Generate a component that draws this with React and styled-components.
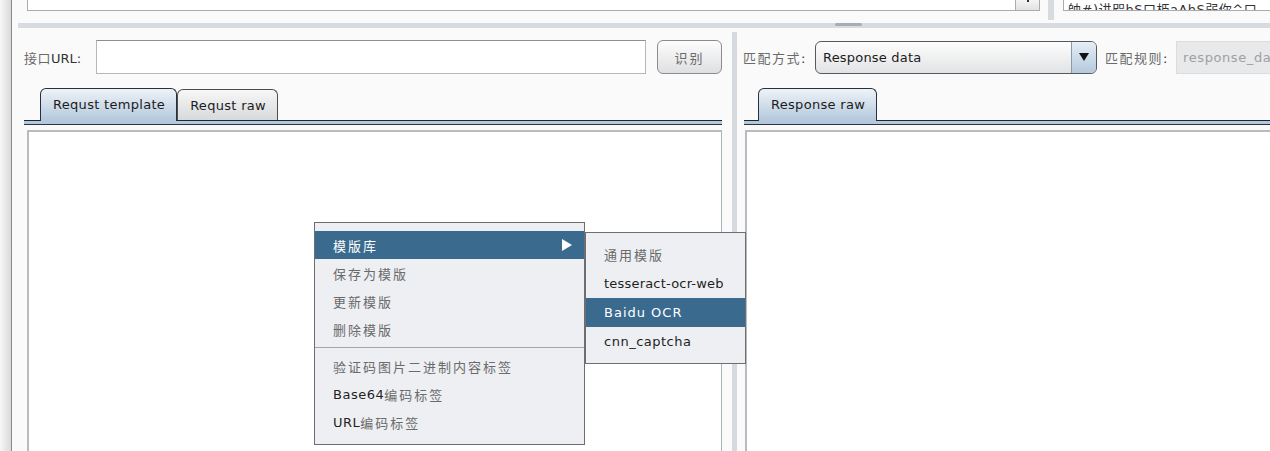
import React from "react";
import styled, { createGlobalStyle } from "styled-components";

const GlobalStyle = createGlobalStyle`
  html, body {
    margin: 0;
    padding: 0;
    background: #fafafa;
    overflow: hidden;
  }
  body {
    font-family: "DejaVu Sans", "Noto Sans CJK SC", sans-serif;
    font-size: 13px;
    color: #222;
  }
  * { box-sizing: border-box; }
`;

const Window = styled.div`
  position: relative;
  width: 1270px;
  height: 451px;
  display: flex;
  overflow: hidden;
  background: #fafafa;
`;

const EdgeStrip = styled.div`
  width: 12px;
  flex-shrink: 0;
  background: linear-gradient(to right, #f7f7f7, #dadada);
  border-right: 1px solid #8a8a8a;
`;

const Main = styled.div`
  flex: 1;
  min-width: 0;
  display: flex;
  flex-direction: column;
`;

/* ---- top split (clipped panes) ---- */
const TopRow = styled.div`
  height: 23px;
  flex-shrink: 0;
  display: flex;
  padding-left: 15px;
`;

const TopBox = styled.div`
  height: 11px;
  width: ${(p) => p.$w || "auto"};
  flex: ${(p) => (p.$w ? "none" : "1")};
  background: #fff;
  border: 1px solid #a9abb0;
  border-top: none;
  border-right: ${(p) => (p.$open ? "none" : "1px solid #a9abb0")};
  display: flex;
  align-items: flex-end;
  justify-content: flex-end;
  overflow: hidden;
`;

const ScrollBtn = styled.div`
  width: 24px;
  height: 10px;
  border-left: 1px solid #a9abb0;
  background: linear-gradient(#f4f4f4, #e2e2e2);
  display: flex;
  justify-content: center;
  &::after {
    content: "";
    width: 2px;
    height: 2px;
    background: #333;
  }
`;

const GarbledText = styled.div`
  line-height: 15px;
  padding-left: 4px;
  margin-bottom: -7px;
  white-space: nowrap;
  color: #333;
  font-size: 13px;
  letter-spacing: 0.5px;
  align-self: flex-end;
  margin-right: auto;
`;

const TopDivider = styled.div`
  width: 6px;
  height: 20px;
  margin: 0 9px 0 8px;
  background: #d7dadf;
`;

const HSplitBar = styled.div`
  height: 5px;
  flex-shrink: 0;
  margin-left: 6px;
  background: #d7dadf;
`;

const Grip = styled.div`
  width: 27px;
  height: 3px;
  margin-left: 817px;
  border-radius: 2px;
  background: #a9adb3;
`;

/* ---- bottom split ---- */
const BottomSplit = styled.div`
  flex: 1;
  display: flex;
  min-height: 0;
`;

const Pane = styled.div`
  display: flex;
  flex-direction: column;
  padding: 12px ${(p) => p.$padR || 0}px 0 ${(p) => p.$padL}px;
  width: ${(p) => (p.$width ? `${p.$width}px` : "auto")};
  flex: ${(p) => (p.$width ? "none" : "1")};
  min-width: 0;
`;

const VSplit = styled.div`
  width: 5px;
  margin-top: 4px;
  flex-shrink: 0;
  background: #d6d9dd;
`;

const FieldRow = styled.div`
  height: 34px;
  display: flex;
  align-items: center;
  flex-shrink: 0;
`;

const Label = styled.div`
  width: ${(p) => p.$w}px;
  margin-left: ${(p) => p.$ml || 0}px;
  flex-shrink: 0;
  white-space: nowrap;
  color: #333;
`;

const Han = styled.span`
  color: #6a6a6a;
  letter-spacing: ${(p) => p.$ls ?? 1}px;
`;

const TextField = styled.div`
  width: ${(p) => p.$w}px;
  height: 34px;
  flex-shrink: 0;
  background: #fff;
  border: 1px solid #b7b7b7;
  border-top-color: #8f8f8f;
`;

const PushButton = styled.div`
  width: 65px;
  height: 34px;
  margin-left: 11px;
  flex-shrink: 0;
  border: 1px solid #8c8c8c;
  border-radius: 6px;
  background: linear-gradient(#fdfdfd, #dedfe1);
  display: flex;
  align-items: center;
  justify-content: center;
`;

const Combo = styled.div`
  width: 282px;
  height: 33px;
  flex-shrink: 0;
  display: flex;
  border: 1px solid #555a60;
  border-radius: 6px;
  background: linear-gradient(#fdfdfd, #e2e3e5);
  overflow: hidden;
`;

const ComboText = styled.div`
  flex: 1;
  padding-left: 7px;
  display: flex;
  align-items: center;
  color: #1c1c1c;
  letter-spacing: 0.2px;
`;

const ComboArrow = styled.div`
  width: 25px;
  border-left: 1px solid #8a9aaa;
  background: linear-gradient(#e6eef6, #b4c9dc);
  display: flex;
  align-items: center;
  justify-content: center;
`;

const DisabledField = styled.div`
  width: 140px;
  height: 33px;
  flex-shrink: 0;
  padding-left: 6px;
  display: flex;
  align-items: center;
  background: #e8e9eb;
  border: 1px solid #dcdcdc;
  color: #a0a0a0;
  letter-spacing: 0.6px;
  white-space: nowrap;
`;

const TabStrip = styled.div`
  height: 32px;
  margin-top: 14px;
  padding-left: ${(p) => p.$indent}px;
  margin-left: ${(p) => p.$ml || 0}px;
  display: flex;
  align-items: flex-end;
  flex-shrink: 0;
`;

const Tab = styled.div`
  position: relative;
  z-index: 1;
  height: ${(p) => (p.$active ? 33 : 31)}px;
  margin-bottom: ${(p) => (p.$active ? -1 : 0)}px;
  padding: 0 11px 0 12px;
  display: flex;
  align-items: center;
  padding-bottom: ${(p) => (p.$active ? 1 : 0)}px;
  border: 1px solid ${(p) => (p.$active ? "#27303b" : "#4a4d52")};
  border-bottom: none;
  border-radius: 6px 6px 0 0;
  background: ${(p) =>
    p.$active
      ? "linear-gradient(#eef3f8, #b3c8dc)"
      : "linear-gradient(#f7f7f7, #d8d9db)"};
  color: #1c1c1c;
  letter-spacing: 0.3px;
  white-space: nowrap;
`;

const TabLine = styled.div`
  height: 5px;
  flex-shrink: 0;
  margin-left: ${(p) => p.$ml || 0}px;
  background: #b3c8dc;
  border-top: 1px solid #1f2630;
  border-bottom: 1px solid #2b3440;
`;

const Editor = styled.div`
  flex: 1;
  margin-top: 5px;
  margin-left: ${(p) => p.$ml}px;
  background: #fff;
  border-top: 2px solid #b8bbc0;
  border-left: 2px solid #b8bbc0;
  border-right: ${(p) => (p.$edge ? "1px solid #b0b2b6" : "none")};
`;

/* ---- popup menus ---- */
const Menu = styled.div`
  position: absolute;
  left: ${(p) => p.$x}px;
  top: ${(p) => p.$y}px;
  width: ${(p) => p.$w}px;
  padding: ${(p) => p.$pad};
  background: #eeeff3;
  border: 1px solid #6e6e6e;
  z-index: 5;
`;

const MenuItem = styled.div`
  height: ${(p) => p.$h || 28}px;
  padding-left: 18px;
  padding-right: 12px;
  display: flex;
  align-items: center;
  white-space: nowrap;
  letter-spacing: ${(p) => p.$ls ?? 0.5}px;
  color: ${(p) => (p.$active ? "#fff" : "#1f1f1f")};
  background: ${(p) => (p.$active ? "#3a6a8e" : "transparent")};
  ${Han} {
    color: ${(p) => (p.$active ? "#fff" : "#6a6a6a")};
    letter-spacing: 2px;
  }
`;

const Arrow = styled.svg`
  margin-left: auto;
`;

const MenuSep = styled.div`
  height: 9px;
  display: flex;
  align-items: center;
  &::after {
    content: "";
    flex: 1;
    border-top: 1px solid #a4a4a4;
  }
`;

export default function App() {
  return (
    <>
      <GlobalStyle />
      <Window>
        <EdgeStrip />
        <Main>
          <TopRow>
            <TopBox $w="1013px">
              <ScrollBtn />
            </TopBox>
            <TopDivider />
            <TopBox $open>
              <GarbledText>帥#)讲咫hS口栕aAhS弱你^口</GarbledText>
            </TopBox>
          </TopRow>
          <HSplitBar>
            <Grip />
          </HSplitBar>
          <BottomSplit>
            <Pane $width={720} $padL={12} $padR={10}>
              <FieldRow>
                <Label $w={72}>
                  <Han $ls={0.5}>接口</Han>URL:
                </Label>
                <TextField $w={550} />
                <PushButton>
                  <Han $ls={2}>识别</Han>
                </PushButton>
              </FieldRow>
              <TabStrip $indent={16}>
                <Tab $active>Requst template</Tab>
                <Tab>Requst raw</Tab>
              </TabStrip>
              <TabLine />
              <Editor $ml={3} $edge />
            </Pane>
            <VSplit />
            <Pane $padL={6}>
              <FieldRow>
                <Label $w={72}>
                  <Han $ls={1.5}>匹配方式</Han>:
                </Label>
                <Combo>
                  <ComboText>Response data</ComboText>
                  <ComboArrow>
                    <svg width="10" height="8" viewBox="0 0 10 8">
                      <path d="M0 0 H10 L5 8 Z" fill="#111" />
                    </svg>
                  </ComboArrow>
                </Combo>
                <Label $w={71} $ml={8}>
                  <Han $ls={1.5}>匹配规则</Han>:
                </Label>
                <DisabledField>response_data</DisabledField>
              </FieldRow>
              <TabStrip $indent={14} $ml={1}>
                <Tab $active>Response raw</Tab>
              </TabStrip>
              <TabLine $ml={1} />
              <Editor $ml={2} />
            </Pane>
          </BottomSplit>
        </Main>

        <Menu $x={314} $y={222} $w={271} $pad="8px 0 8px">
          <MenuItem $active>
            <Han>模版库</Han>
            <Arrow width="10" height="12" viewBox="0 0 10 12">
              <path d="M0 0 L10 6 L0 12 Z" fill="#fff" />
            </Arrow>
          </MenuItem>
          <MenuItem>
            <Han>保存为模版</Han>
          </MenuItem>
          <MenuItem>
            <Han>更新模版</Han>
          </MenuItem>
          <MenuItem>
            <Han>删除模版</Han>
          </MenuItem>
          <MenuSep />
          <MenuItem>
            <Han>验证码图片二进制内容标签</Han>
          </MenuItem>
          <MenuItem>
            Base64<Han>编码标签</Han>
          </MenuItem>
          <MenuItem>
            URL<Han>编码标签</Han>
          </MenuItem>

          <Menu $x={270} $y={9} $w={161} $pad="7px 0">
            <MenuItem $h={29}>
              <Han>通用模版</Han>
            </MenuItem>
            <MenuItem $h={29} $ls={0.2}>
              tesseract-ocr-web
            </MenuItem>
            <MenuItem $h={29} $ls={1} $active>
              Baidu OCR
            </MenuItem>
            <MenuItem $h={29}>cnn_captcha</MenuItem>
          </Menu>
        </Menu>
      </Window>
    </>
  );
}
